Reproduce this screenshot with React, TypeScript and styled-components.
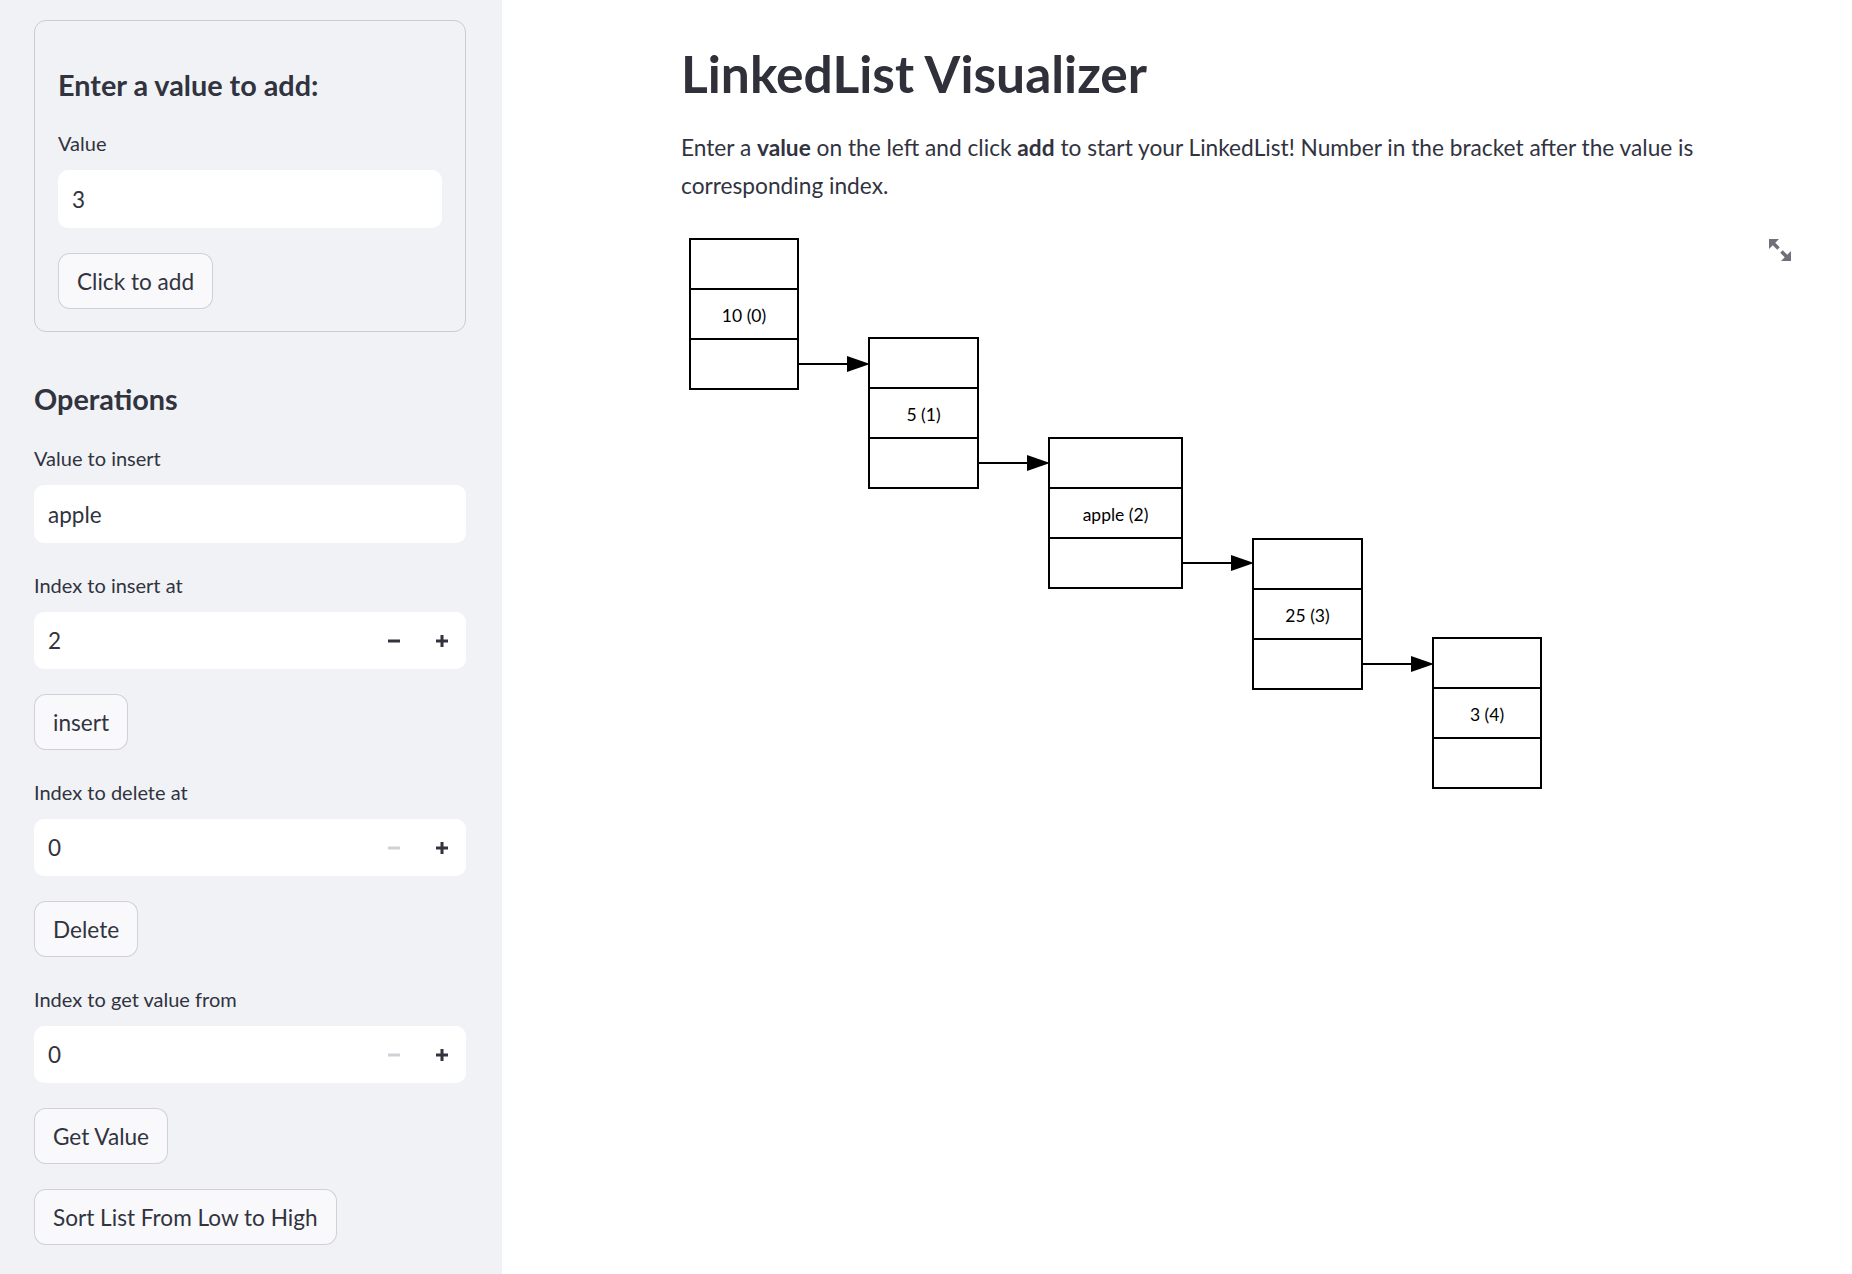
import React from "react";
import styled, { createGlobalStyle } from "styled-components";

const GlobalStyle = createGlobalStyle`
  html, body { margin: 0; padding: 0; background: #ffffff; }
  body {
    font-family: Lato, "Noto Sans", sans-serif;
    color: #31333f;
    -webkit-font-smoothing: antialiased;
  }
  * { box-sizing: border-box; }
`;

const Shell = styled.div`
  display: flex;
  min-height: 100vh;
`;

const Sidebar = styled.aside`
  flex: 0 0 502px;
  width: 502px;
  background: #f0f2f6;
  padding: 20px 36px 24px 34px;
  display: flex;
  flex-direction: column;
`;

const FormCard = styled.div`
  border: 1px solid rgba(49, 51, 63, 0.2);
  border-radius: 12px;
  padding: 46px 23px 22px;
  display: flex;
  flex-direction: column;
  gap: 25px;
`;

const SubHeading = styled.h3<{ $after?: number }>`
  margin: 0 0 ${(p) => p.$after ?? 0}px;
  font-size: 28.8px;
  line-height: 36px;
  font-weight: 700;
  color: #31333f;
`;

const Operations = styled.section`
  margin-top: 49px;
  display: flex;
  flex-direction: column;
  gap: 25px;
`;

const Field = styled.div`
  display: flex;
  flex-direction: column;
`;

const Label = styled.label`
  font-size: 20px;
  line-height: 34px;
  margin-bottom: 10px;
  color: #31333f;
`;

const InputShell = styled.div<{ $tall?: boolean }>`
  display: flex;
  align-items: stretch;
  height: ${(p) => (p.$tall ? 58 : 57)}px;
  background: #ffffff;
  border-radius: 10px;
  overflow: hidden;
`;

const InputText = styled.div`
  flex: 1;
  display: flex;
  align-items: center;
  padding-left: 14px;
  font-size: 22.5px;
  color: #31333f;
`;

const StepButton = styled.div<{ $disabled?: boolean }>`
  width: 48px;
  display: flex;
  align-items: center;
  justify-content: center;
  color: ${(p) => (p.$disabled ? "#cfd1d6" : "#31333f")};
`;

const Button = styled.button`
  align-self: flex-start;
  height: 56px;
  padding: 0 18px;
  font-family: inherit;
  font-size: 22.6px;
  color: #31333f;
  background: #f9f9fb;
  border: 1px solid rgba(49, 51, 63, 0.2);
  border-radius: 12px;
  cursor: pointer;
`;

const Main = styled.main`
  flex: 1;
  min-width: 0;
  padding: 43px 61px 40px 179px;
`;

const Title = styled.h1`
  margin: 0;
  font-size: 51.5px;
  line-height: 60px;
  font-weight: 700;
  color: #2f3039;
`;

const Intro = styled.p`
  margin: 26px 0 0;
  font-size: 22.7px;
  line-height: 38px;
  color: #31333f;
  b { font-weight: 700; }
`;

const GraphFrame = styled.div`
  position: relative;
  margin-top: 24px;
  height: 570px;
`;

const ExpandButton = styled.div`
  position: absolute;
  top: 8px;
  right: -2px;
  width: 26px;
  height: 26px;
  color: #6f7079;
`;

const MinusIcon = () => (
  <svg width="14" height="14" viewBox="0 0 14 14">
    <rect x="1" y="5.5" width="12" height="3" fill="currentColor" />
  </svg>
);

const PlusIcon = () => (
  <svg width="14" height="14" viewBox="0 0 14 14">
    <rect x="1" y="5.5" width="12" height="3" fill="currentColor" />
    <rect x="5.5" y="1" width="3" height="12" fill="currentColor" />
  </svg>
);

const ExpandIcon = () => (
  <svg width="26" height="26" viewBox="0 0 26 26" fill="currentColor">
    <polygon points="2,2 12,2 2,12" />
    <line x1="4" y1="4" x2="11.5" y2="11.5" stroke="currentColor" strokeWidth="3.6" />
    <polygon points="24,24 14,24 24,14" />
    <line x1="14.5" y1="14.5" x2="22" y2="22" stroke="currentColor" strokeWidth="3.6" />
  </svg>
);

const NumberField = ({ label, value, minusDisabled }: { label: string; value: string; minusDisabled?: boolean }) => (
  <Field>
    <Label>{label}</Label>
    <InputShell>
      <InputText>{value}</InputText>
      <StepButton $disabled={minusDisabled}>
        <MinusIcon />
      </StepButton>
      <StepButton>
        <PlusIcon />
      </StepButton>
    </InputShell>
  </Field>
);

const TextField = ({ label, value, tall }: { label: string; value: string; tall?: boolean }) => (
  <Field>
    <Label>{label}</Label>
    <InputShell $tall={tall}>
      <InputText>{value}</InputText>
    </InputShell>
  </Field>
);

type Node = { label: string; x: number; y: number; w: number };

const nodes: Node[] = [
  { label: "10 (0)", x: 9, y: 10, w: 108 },
  { label: "5 (1)", x: 188, y: 109, w: 109 },
  { label: "apple (2)", x: 368, y: 209, w: 133 },
  { label: "25 (3)", x: 572, y: 310, w: 109 },
  { label: "3 (4)", x: 752, y: 409, w: 108 },
];

const LinkedListGraph = () => (
  <svg width="880" height="570" viewBox="0 0 880 570">
    {nodes.map((n, i) => (
      <g key={n.label}>
        <rect x={n.x} y={n.y} width={n.w} height={150} fill="#fff" stroke="#000" strokeWidth="2" />
        <line x1={n.x} y1={n.y + 50} x2={n.x + n.w} y2={n.y + 50} stroke="#000" strokeWidth="2" />
        <line x1={n.x} y1={n.y + 100} x2={n.x + n.w} y2={n.y + 100} stroke="#000" strokeWidth="2" />
        <text
          x={n.x + n.w / 2}
          y={n.y + 83}
          textAnchor="middle"
          fontFamily="Lato, 'Noto Sans', sans-serif"
          fontSize="17.5"
          fill="#000"
        >
          {n.label}
        </text>
        {i < nodes.length - 1 && (
          <g>
            <line
              x1={n.x + n.w}
              y1={n.y + 125}
              x2={nodes[i + 1].x - 20}
              y2={n.y + 125}
              stroke="#000"
              strokeWidth="2"
            />
            <polygon
              points={`${nodes[i + 1].x + 1},${n.y + 125} ${nodes[i + 1].x - 22},${n.y + 117} ${nodes[i + 1].x - 22},${n.y + 133}`}
              fill="#000"
            />
          </g>
        )}
      </g>
    ))}
  </svg>
);

export default function App() {
  return (
    <>
      <GlobalStyle />
      <Shell>
        <Sidebar>
          <FormCard>
            <SubHeading $after={-2}>Enter a value to add:</SubHeading>
            <TextField label="Value" value="3" tall />
            <Button>Click to add</Button>
          </FormCard>
          <Operations>
            <SubHeading $after={-1}>Operations</SubHeading>
            <TextField label="Value to insert" value="apple" tall />
            <NumberField label="Index to insert at" value="2" />
            <Button>insert</Button>
            <NumberField label="Index to delete at" value="0" minusDisabled />
            <Button>Delete</Button>
            <NumberField label="Index to get value from" value="0" minusDisabled />
            <Button>Get Value</Button>
            <Button>Sort List From Low to High</Button>
          </Operations>
        </Sidebar>
        <Main>
          <Title>LinkedList Visualizer</Title>
          <Intro>
            Enter a <b>value</b> on the left and click <b>add</b> to start your LinkedList! Number in the bracket
            after the value is corresponding index.
          </Intro>
          <GraphFrame>
            <LinkedListGraph />
            <ExpandButton>
              <ExpandIcon />
            </ExpandButton>
          </GraphFrame>
        </Main>
      </Shell>
    </>
  );
}
